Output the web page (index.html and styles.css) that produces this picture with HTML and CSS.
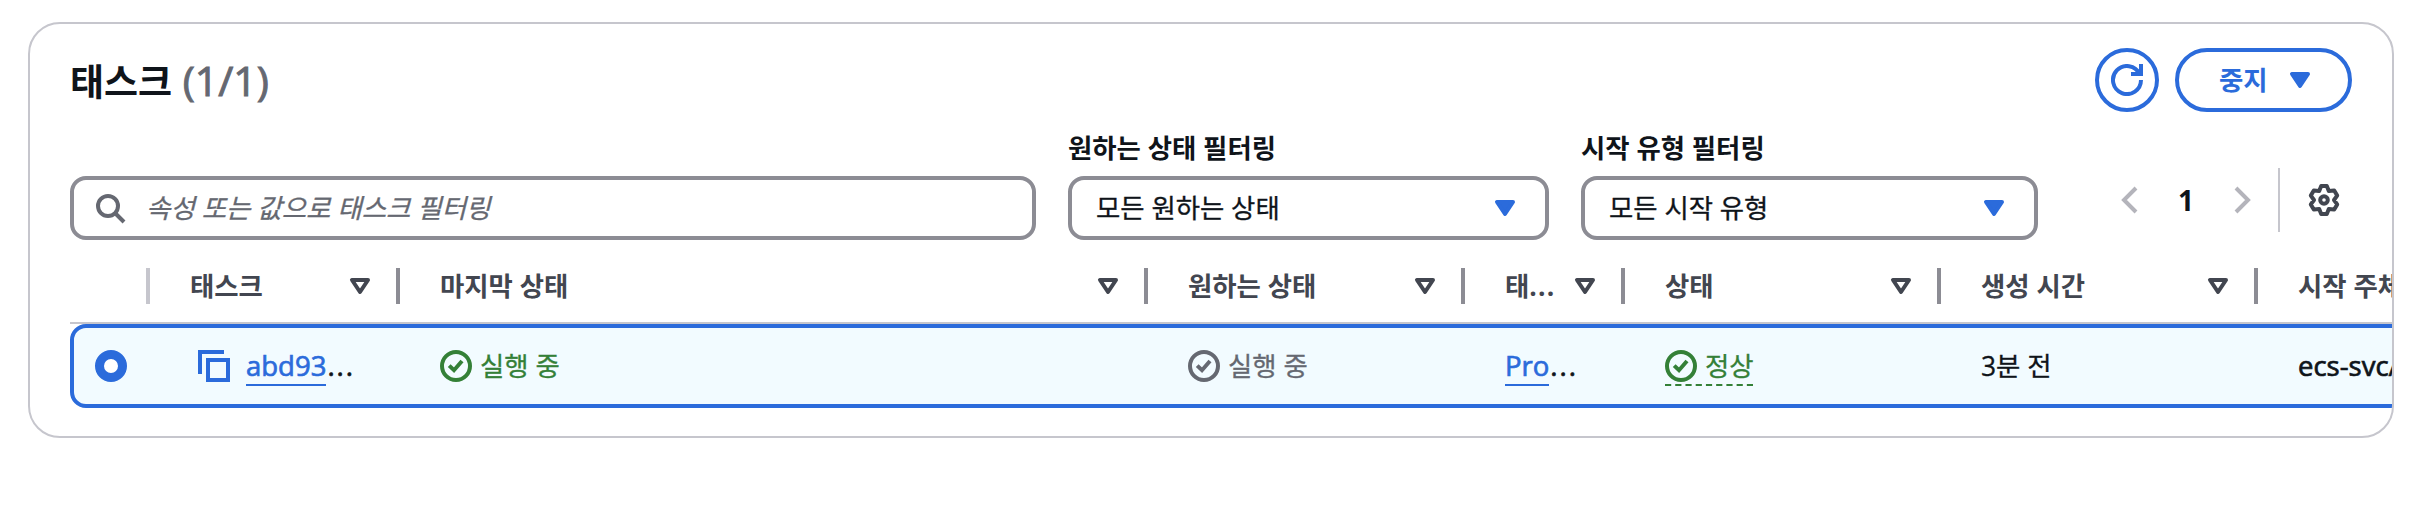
FILE: index.html
```html
<!DOCTYPE html>
<html lang="ko">
<head>
<meta charset="utf-8">
<title>태스크</title>
<link rel="stylesheet" href="styles.css">
</head>
<body>
<svg class="defs" aria-hidden="true">
  <symbol id="caret" viewBox="0 0 16 16"><path d="M4 5h8l-4 6z" stroke-width="2" stroke-linejoin="round" stroke="currentColor"/></symbol>
  <symbol id="check" viewBox="0 0 16 16"><g fill="none" stroke="currentColor" stroke-width="2"><circle cx="8" cy="8" r="7"/><path d="m4.6 7.8 2.4 2.3 4-4.6"/></g></symbol>
</svg>
<main class="card">
  <header class="head">
    <h1 class="title">태스크 <span class="count">(1/1)</span></h1>
    <div class="actions">
      <button class="btn btn-round" aria-label="새로 고침"><svg class="icon line" viewBox="0 0 16 16"><path d="M15 8a7 7 0 1 1-.68-3M10 5h5V0"/></svg></button>
      <button class="btn btn-stop"><span>중지</span><svg class="icon solid"><use href="#caret"/></svg></button>
    </div>
  </header>
  <section class="tools">
    <div class="search"><svg class="icon line" viewBox="0 0 16 16"><circle cx="7" cy="7" r="5"/><path d="m15 15-4.5-4.5"/></svg><span class="placeholder">속성 또는 값으로 태스크 필터링</span></div>
    <div class="field field-desired"><label class="label">원하는 상태 필터링</label><div class="select"><span>모든 원하는 상태</span><svg class="icon solid"><use href="#caret"/></svg></div></div>
    <div class="field field-launch"><label class="label">시작 유형 필터링</label><div class="select"><span>모든 시작 유형</span><svg class="icon solid"><use href="#caret"/></svg></div></div>
    <nav class="pager">
      <svg class="icon line muted" viewBox="0 0 16 16"><path d="M11 2 5 8l6 6"/></svg>
      <b class="page">1</b>
      <svg class="icon line muted" viewBox="0 0 16 16"><path d="m5 2 6 6-6 6"/></svg>
      <span class="rule"></span>
      <svg class="icon line gear" viewBox="0 0 16 16"><path stroke-linejoin="round" d="M6.6 1h2.8l1 2.5 2.7-.3L14.6 5.8 13 8l1.6 2.2-1.5 2.6-2.7-.3-1 2.5H6.6l-1-2.5-2.7.3-1.5-2.6L3 8 1.4 5.8l1.5-2.6 2.7.3z"/><circle cx="8" cy="8" r="1.9"/></svg>
    </nav>
  </section>
  <section class="table">
    <div class="row thead">
      <div class="th th-pick"></div>
      <div class="th"><span class="name">태스크</span><svg class="icon"><use href="#caret"/></svg></div>
      <div class="th"><span class="name">마지막 상태</span><svg class="icon"><use href="#caret"/></svg></div>
      <div class="th"><span class="name">원하는 상태</span><svg class="icon"><use href="#caret"/></svg></div>
      <div class="th"><span class="name">태<span class="dots">...</span></span><svg class="icon"><use href="#caret"/></svg></div>
      <div class="th"><span class="name">상태</span><svg class="icon"><use href="#caret"/></svg></div>
      <div class="th"><span class="name">생성 시간</span><svg class="icon"><use href="#caret"/></svg></div>
      <div class="th th-last"><span class="name">시작 주체</span></div>
    </div>
    <div class="row selected">
      <div class="td td-pick"><span class="radio"></span></div>
      <div class="td td-task"><svg class="icon line copy" viewBox="0 0 16 16"><path d="M1 12V1h12M5 5h10v10H5z"/></svg><span class="latin"><a class="link">abd93</a><span class="dots">...</span></span></div>
      <div class="td"><span class="status ok"><svg class="icon"><use href="#check"/></svg>실행 중</span></div>
      <div class="td"><span class="status"><svg class="icon"><use href="#check"/></svg>실행 중</span></div>
      <div class="td"><span class="latin"><a class="link">Pro</a><span class="dots">...</span></span></div>
      <div class="td"><span class="status ok health"><svg class="icon"><use href="#check"/></svg>정상<svg class="dash" viewBox="0 0 88 2"><path d="M0 1h88" stroke="currentColor" stroke-width="2" stroke-dasharray="6.2 4.03"/></svg></span></div>
      <div class="td"><span>3분 전</span></div>
      <div class="td"><span class="latin">ecs-svc/</span></div>
    </div>
  </section>
</main>
</body>
</html>
```
FILE: styles.css
```css
* { box-sizing: border-box; }
body {
  margin: 0;
  padding: 22px 24px 0 28px;
  background: #fff;
  color: #0f141a;
  font: 400 28px/40px "Open Sans", "Noto Sans CJK KR", sans-serif;
}
.defs { display: none; }
.icon { display: block; flex: none; width: 32px; height: 32px; fill: none; color: inherit; }
.line { stroke: currentColor; stroke-width: 2; }
.solid { fill: currentColor; }

.card {
  width: 2366px;
  height: 416px;
  border: 2px solid #c6c6cd;
  border-radius: 32px;
  overflow: hidden;
}

.head {
  display: flex;
  justify-content: space-between;
  height: 110px;
  padding: 24px 40px 0;
}
.title { margin: 0; font-size: 37px; line-height: 64px; font-weight: 700; white-space: nowrap; }
.count { margin-left: 1px; color: #656871; font-weight: 400; font-size: 41px; -webkit-text-stroke: 1px currentColor; }
.actions { display: flex; gap: 16px; }
.btn {
  display: flex;
  align-items: center;
  height: 64px;
  padding: 0;
  border: 4px solid #2b6bdb;
  border-radius: 32px;
  background: #fff;
  color: #2b6bdb;
  font: inherit;
  font-weight: 700;
  font-size: 26.4px;
}
.btn-round { width: 64px; justify-content: center; }
.btn-stop { width: 177px; padding-left: 40px; gap: 16px; }

.tools { display: flex; align-items: flex-end; gap: 32px; height: 106px; padding: 0 40px 0; }
.search, .select {
  display: flex;
  align-items: center;
  height: 64px;
  border: 4px solid #8c8c94;
  border-radius: 16px;
  font-size: 26.4px;
  -webkit-text-stroke: 0.3px currentColor;
}
.search { width: 966px; padding-left: 20px; gap: 20px; color: #656871; }
.placeholder { font-style: italic; font-size: 26.5px; }
.field-desired { width: 481px; }
.field-launch { width: 457px; }
.label { display: block; height: 48px; font-size: 26.4px; font-weight: 700; }
.select { justify-content: space-between; padding: 0 24px; }
.select .icon { color: #2b6bdb; }
.pager { display: flex; align-items: center; height: 64px; margin: 0 0 8px 44px; }
.muted { color: #b4b4bb; }
.page { width: 80px; text-align: center; font-size: 28px; }
.rule { width: 2px; height: 64px; margin: 0 28px 0 20px; background: #c6c6cd; }
.gear { color: #424650; }

.table { width: 2500px; padding: 0 0 0 40px; }
.row { display: grid; grid-template-columns: 80px 250px 748px 317px 160px 316px 317px 400px; }
.thead { height: 84px; border-bottom: 2px solid #c6c6cd; color: #424650; font-weight: 700; font-size: 26.4px; }
.th {
  display: flex;
  align-items: center;
  justify-content: space-between;
  height: 36px;
  margin-top: 28px;
  padding: 0 20px 0 40px;
  border-right: 4px solid #8c8c94;
}
.th-pick { border-color: #c6c6cd; }
.th-last { border: 0; }
.name { white-space: nowrap; }
.dots { letter-spacing: 2px; margin-left: 1px; }
.th .dots { letter-spacing: 1.2px; margin-left: 0; }
.selected {
  height: 84px;
  border: 4px solid #2b6bdb;
  border-radius: 16px;
  background: #f2fbff;
  font-size: 26.4px;
  -webkit-text-stroke: 0.3px currentColor;
}
.td { display: flex; align-items: center; padding-left: 36px; white-space: nowrap; }
.td-pick { padding: 0 0 0 21px; }
.radio { width: 32px; height: 32px; border: 9.5px solid #2b6bdb; border-radius: 50%; background: #fff; }
.td-task { padding-left: 44px; gap: 16px; }
.copy { color: #2b6bdb; }
.latin { font-size: 27.5px; -webkit-text-stroke: 0.7px currentColor; }
.link { color: #2b6bdb; border-bottom: 2px solid #2b6bdb; }
.status { display: flex; align-items: center; gap: 8px; color: #656871; }
.ok { color: #348037; }
.health { position: relative; }
.dash { position: absolute; left: 0; bottom: 0; width: 88px; height: 2px; }
```
